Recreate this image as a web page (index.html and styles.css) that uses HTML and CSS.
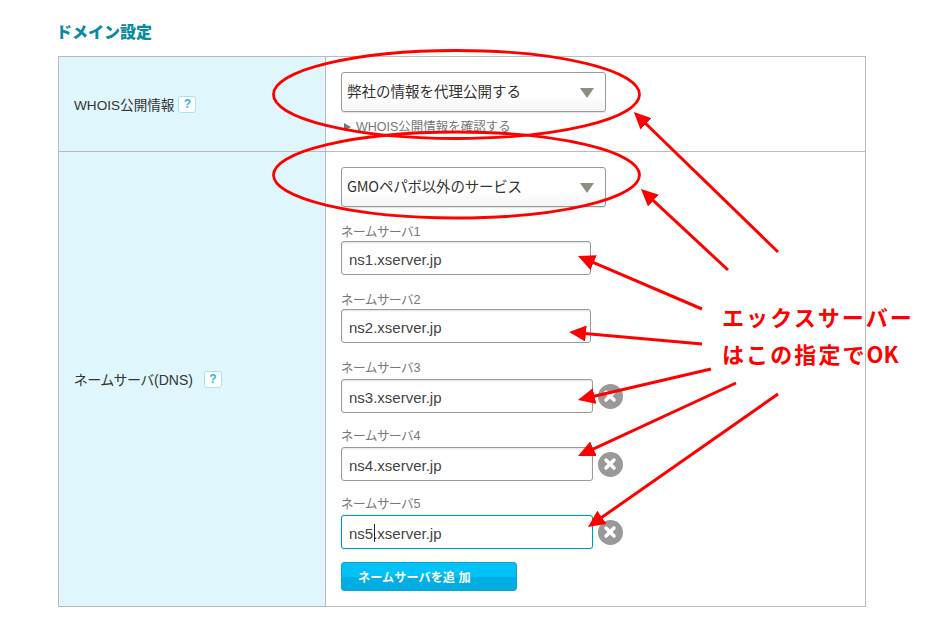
FILE: index.html
```html
<!DOCTYPE html>
<html lang="ja">
<head>
<meta charset="utf-8">
<title>ドメイン設定</title>
<link rel="stylesheet" href="styles.css">
</head>
<body>
<main class="page">
  <h2 class="title">ドメイン設定</h2>
  <div class="table">
    <section class="row row-whois">
      <div class="head head-whois"><span>WHOIS公開情報</span><span class="help">?</span></div>
      <div class="cell">
        <div class="select"><span>弊社の情報を代理公開する</span><i class="tri"></i></div>
        <a class="link"><i class="play"></i>WHOIS公開情報を確認する</a>
      </div>
    </section>
    <section class="row">
      <div class="head"><span>ネームサーバ(DNS)</span><span class="help help-dns">?</span></div>
      <div class="cell">
        <div class="select select-tight"><span>GMOペパボ以外のサービス</span><i class="tri"></i></div>
        <div class="field first">
          <label class="label">ネームサーバ1</label>
          <div class="line"><input class="input short" value="ns1.xserver.jp"></div>
        </div>
        <div class="field">
          <label class="label">ネームサーバ2</label>
          <div class="line"><input class="input short" value="ns2.xserver.jp"></div>
        </div>
        <div class="field wide">
          <label class="label">ネームサーバ3</label>
          <div class="line"><input class="input" value="ns3.xserver.jp"><span class="del"><svg viewBox="0 0 24 24" width="24" height="24"><path d="M8 8l8 8M16 8l-8 8" class="del-x"/></svg></span></div>
        </div>
        <div class="field wide">
          <label class="label">ネームサーバ4</label>
          <div class="line"><input class="input" value="ns4.xserver.jp"><span class="del"><svg viewBox="0 0 24 24" width="24" height="24"><path d="M8 8l8 8M16 8l-8 8" class="del-x"/></svg></span></div>
        </div>
        <div class="field wide">
          <label class="label">ネームサーバ5</label>
          <div class="line"><input class="input focus" value="ns5.xserver.jp"><i class="caret"></i><span class="del"><svg viewBox="0 0 24 24" width="24" height="24"><path d="M8 8l8 8M16 8l-8 8" class="del-x"/></svg></span></div>
        </div>
        <button class="add">ネームサーバを追 加</button>
      </div>
    </section>
  </div>
</main>

<svg class="overlay" width="932" height="637" viewBox="0 0 932 637">
  <defs>
    <marker id="head" markerUnits="userSpaceOnUse" markerWidth="20" markerHeight="16" refX="7" refY="8" orient="auto">
      <path d="M0 0L17 8L0 16Z" class="head-fill"/>
    </marker>
  </defs>
  <ellipse class="ring" cx="456.500" cy="94.500" rx="183" ry="44"/>
  <ellipse class="ring" cx="456.500" cy="175" rx="183" ry="43"/>
  <g class="arrows">
    <line x1="778" y1="252" x2="641" y2="119" marker-end="url(#head)"/>
    <line x1="728" y1="270" x2="648.300" y2="195.800" marker-end="url(#head)"/>
    <line x1="702" y1="309" x2="587.200" y2="259.900" marker-end="url(#head)"/>
    <line x1="702" y1="344" x2="579" y2="332.900" marker-end="url(#head)"/>
    <line x1="711" y1="369" x2="587.700" y2="397.700" marker-end="url(#head)"/>
    <line x1="736" y1="383" x2="587.100" y2="451.800" marker-end="url(#head)"/>
    <line x1="778" y1="394" x2="596.200" y2="521.300" marker-end="url(#head)"/>
  </g>
</svg>
<p class="note">エックスサーバー<br>はこの指定で<span class="note-ok">OK</span></p>
</body>
</html>
```

FILE: styles.css
```css
* { box-sizing: border-box; }
html, body { margin: 0; padding: 0; background: #fff; }
body {
  width: 932px;
  height: 637px;
  overflow: hidden;
  position: relative;
  font-family: "Liberation Sans", "Noto Sans CJK JP", sans-serif;
  color: #333;
}
.page { padding: 23px 66px 0 58px; }
.title {
  margin: 0 0 13px -2px;
  height: 20px;
  font-size: 16px;
  line-height: 20px;
  font-weight: 900;
  color: #0a8ba3;
}
.table { border: 1px solid #bbb; width: 808px; height: 551px; display: flex; flex-direction: column; }
.row { display: flex; flex: 1; }
.row-whois { flex: 0 0 95px; border-bottom: 1px solid #bbb; }
.head {
  width: 267px;
  flex: none;
  background: #dff7fc;
  border-right: 1px solid #bbb;
  padding-left: 15px;
  display: flex;
  align-items: center;
  gap: 4px;
  font-size: 14px;
  font-feature-settings: "palt";
  color: #333;
}
.head-whois { font-size: 13.600px; }
.help {
  width: 18px;
  height: 17px;
  border: 1px solid #a8e4ef;
  border-radius: 3px;
  background: #fff;
  color: #33b6d6;
  font-size: 12px;
  font-weight: 700;
  line-height: 15px;
  text-align: center;
}
.help-dns { margin-left: 7px; }
.cell { padding: 15px 0 0 15px; flex: 1; }
.select {
  width: 265px;
  height: 40px;
  border: 1px solid #9a9a9a;
  border-radius: 3px;
  background: linear-gradient(#fff 60%, #f4f4f4);
  box-shadow: 0 1px 1px rgba(0,0,0,.12);
  padding: 0 11px 4px 5px;
  display: flex;
  align-items: center;
  justify-content: space-between;
  font-family: "Noto Sans CJK JP", sans-serif;
  font-size: 14.500px;
  color: #333;
}
.select-tight { letter-spacing: -0.200px; }
.tri {
  width: 0;
  height: 0;
  margin-top: 5px;
  border-left: 7px solid transparent;
  border-right: 7px solid transparent;
  border-top: 10px solid #8d8d80;
}
.link {
  display: flex;
  align-items: center;
  margin: 7px 0 0 3px;
  font-size: 12.500px;
  line-height: 16px;
  color: #777;
}
.play {
  width: 0;
  height: 0;
  border-top: 4.500px solid transparent;
  border-bottom: 4.500px solid transparent;
  border-left: 7px solid #777;
  margin-right: 5px;
}
.field.first { margin-top: 15px; }
.label {
  display: block;
  height: 19px;
  font-size: 12.700px;
  line-height: 21px;
  font-feature-settings: "palt";
  color: #777;
}
.wide .label { height: 21px; }
.line { display: flex; align-items: center; height: 34px; margin-bottom: 15px; position: relative; }
.wide .line { margin-bottom: 13px; }
.input {
  width: 252px;
  height: 34px;
  border: 1px solid #999;
  border-radius: 3px;
  padding: 2px 7px 0;
  font: 15px "Liberation Sans", sans-serif;
  color: #444;
  background: #fff;
  box-shadow: inset 0 1px 2px rgba(0,0,0,.12);
  outline: none;
}
.input.short { width: 250px; }
.input.focus { border-color: #0a93bd; box-shadow: 0 0 2px rgba(10,147,189,.4); }
.caret {
  position: absolute;
  left: 33px;
  top: 9px;
  width: 1px;
  height: 18px;
  background: #222;
}
.del {
  width: 25px;
  height: 25px;
  border-radius: 50%;
  background: #999;
  margin-left: 4.500px;
  display: flex;
  align-items: center;
  justify-content: center;
}
.del-x { stroke: #fff; stroke-width: 3.500; stroke-linecap: round; fill: none; }
.add {
  display: block;
  width: 176px;
  height: 29px;
  padding: 0 0 0 16px;
  border: 1px solid #0aa6d8;
  border-radius: 3px;
  background: linear-gradient(#00c2f6 50%, #00aee3 50%);
  color: #fff;
  font: 700 12.200px "Liberation Sans", "Noto Sans CJK JP", sans-serif;
  text-align: left;
}
.overlay { position: absolute; left: 0; top: 0; pointer-events: none; }
.ring { fill: none; stroke: #f00; stroke-width: 2.800; }
.arrows line { stroke: #f00; stroke-width: 3; }
.head-fill { fill: #f00; }
.note {
  position: absolute;
  left: 722px;
  top: 298px;
  margin: 0;
  font-family: "Noto Sans CJK JP", sans-serif;
  font-size: 22px;
  line-height: 37px;
  letter-spacing: 2.100px;
  font-weight: 700;
  color: #f00;
  white-space: nowrap;
}
.note-ok { letter-spacing: 0; }
```
